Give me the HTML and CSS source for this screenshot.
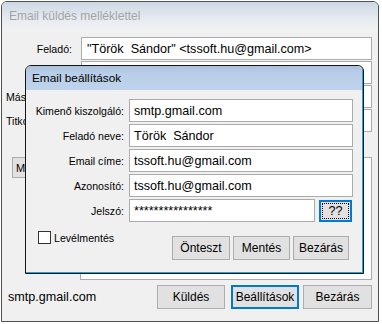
FILE: index.html
```html
<!DOCTYPE html>
<html lang="hu">
<head>
<meta charset="utf-8">
<title>Email küldés melléklettel</title>
<link rel="stylesheet" href="styles.css">
</head>
<body>
<div class="window">
  <div class="titlebar">Email küldés melléklettel</div>
  <div class="main">
    <div class="fields">
      <span class="lbl right">Feladó:</span><div class="input">"Török&nbsp; Sándor" &lt;tssoft.hu@gmail.com&gt;</div>
      <span class="lbl right"></span><div class="input"></div>
      <span class="lbl">Másolat:</span><div class="input"></div>
      <span class="lbl">Titkos:</span><div class="input"></div>
    </div>
    <div class="attach">
      <button class="btn attach-btn">M</button>
      <div class="textarea"></div>
    </div>
    <div class="footer">
      <span class="status">smtp.gmail.com</span>
      <button class="btn w-kuld">Küldés</button>
      <button class="btn focus w-beall">Beállítások</button>
      <button class="btn w-bez">Bezárás</button>
    </div>
  </div>

  <div class="dialog">
    <div class="dtitle">Email beállítások</div>
    <div class="dform">
      <span class="dlbl">Kimenő kiszolgáló:</span><div class="input">smtp.gmail.com</div>
      <span class="dlbl">Feladó neve:</span><div class="input">Török&nbsp; Sándor</div>
      <span class="dlbl">Email címe:</span><div class="input">tssoft.hu@gmail.com</div>
      <span class="dlbl">Azonosító:</span><div class="input">tssoft.hu@gmail.com</div>
      <span class="dlbl">Jelszó:</span>
      <div class="pwrow">
        <div class="input pw">****************</div>
        <button class="btn focus qq"><span class="dots">??</span></button>
      </div>
    </div>
    <div class="dbottom">
      <label class="check"><span class="box"></span>Levélmentés</label>
      <div class="dbtns">
        <button class="btn w-ont">Önteszt</button>
        <button class="btn w-ment">Mentés</button>
        <button class="btn w-dbez">Bezárás</button>
      </div>
    </div>
  </div>
</div>
</body>
</html>
```

FILE: styles.css
```css
html, body {
  margin: 0;
  padding: 0;
  background: #ffffff;
}
body {
  width: 382px;
  height: 324px;
  overflow: hidden;
  font-family: "Liberation Sans", Arial, sans-serif;
}
.window {
  position: relative;
  box-sizing: border-box;
  margin: 1px 0 0 1px;
  width: 378px;
  height: 321px;
  border: 1px solid #505050;
  border-radius: 6px 6px 0 0;
  background: #f0f0f0;
  display: flex;
  flex-direction: column;
}
.titlebar {
  height: 28px;
  flex: none;
  box-sizing: border-box;
  padding-left: 7px;
  display: flex;
  align-items: center;
  font-size: 12px;
  color: #a3a3a3;
  border-radius: 5px 5px 0 0;
  background: linear-gradient(#cdd7e4, #e7ebf1 60%, #f0f1f3);
}
.main {
  flex: 1;
  display: flex;
  flex-direction: column;
  padding-top: 7px;
}
.fields {
  display: grid;
  grid-template-columns: 66px 291px;
  column-gap: 9px;
  row-gap: 1px;
  padding-left: 4px;
}
.lbl {
  font-size: 10.6px;
  color: #000;
  display: flex;
  align-items: center;
  white-space: nowrap;
}
.lbl.right {
  justify-content: flex-end;
}
.input {
  box-sizing: border-box;
  height: 23px;
  background: #fff;
  border: 1px solid #ababab;
  font-size: 12.6px;
  color: #000;
  padding-left: 5px;
  display: flex;
  align-items: center;
  white-space: nowrap;
  overflow: hidden;
}
.attach {
  margin-top: 25px;
  display: flex;
  align-items: flex-start;
  padding-left: 10px;
}
.btn {
  box-sizing: border-box;
  height: 24px;
  margin: 0;
  padding: 0;
  background: #e1e1e1;
  border: 1px solid #adadad;
  font-family: "Liberation Sans", Arial, sans-serif;
  font-size: 12px;
  color: #000;
}
.btn.focus {
  border: 2px solid #0078d7;
}
.attach-btn {
  width: 62px;
  height: 21px;
  font-size: 11px;
  text-align: left;
  padding-left: 3px;
}
.textarea {
  box-sizing: border-box;
  margin-left: 6px;
  width: 292px;
  height: 123px;
  background: #fff;
  border: 1px solid #ababab;
}
.footer {
  margin-top: 5px;
  display: flex;
  align-items: center;
  padding: 0 6px 0 6px;
}
.status {
  font-size: 12.6px;
  color: #000;
  margin-right: auto;
}
.w-kuld { width: 68px; }
.w-beall { width: 68px; margin-left: 6px; }
.w-bez { width: 69px; margin-left: 4px; }

/* dialog window lying over the main window */
.dialog {
  position: absolute;
  left: 23px;
  top: 63px;
  box-sizing: border-box;
  width: 339px;
  height: 209px;
  border: 1px solid #151515;
  border-radius: 6px 6px 0 0;
  background: #f0f0f0;
  box-shadow: inset -1px -1px 0 #19a6e4;
}
.dtitle {
  height: 24px;
  box-sizing: border-box;
  padding-left: 6px;
  display: flex;
  align-items: center;
  font-size: 11.8px;
  color: #000;
  border-radius: 5px 5px 0 0;
  background: linear-gradient(#a9c0dc, #b9cee8 30%, #bfd3ec);
  margin-right: 1px;
}
.dform {
  margin-top: 9px;
  display: grid;
  grid-template-columns: 98px 224px;
  column-gap: 5px;
  row-gap: 2px;
}
.dlbl {
  font-size: 10.6px;
  color: #000;
  display: flex;
  align-items: center;
  justify-content: flex-end;
  white-space: nowrap;
}
.dform .input {
  padding-left: 4px;
}
.pwrow {
  display: flex;
  align-items: center;
}
.input.pw {
  width: 186px;
}
.qq {
  width: 33px;
  height: 22px;
  margin-left: 4px;
  padding: 1px;
  display: flex;
}
.dots {
  flex: 1;
  border: 1px dotted #000;
  display: flex;
  align-items: center;
  justify-content: center;
  font-size: 12.6px;
}
.dbottom {
  margin-top: 9px;
  display: flex;
  align-items: flex-start;
  padding: 0 14px 0 12px;
}
.check {
  display: flex;
  align-items: center;
  font-size: 10.6px;
  color: #000;
}
.box {
  box-sizing: border-box;
  width: 13px;
  height: 13px;
  border: 1px solid #333;
  background: #fff;
  margin-right: 3px;
}
.dbtns {
  margin-left: auto;
  margin-top: 5px;
  display: flex;
}
.w-ont { width: 58px; }
.w-ment { width: 57px; margin-left: 3px; }
.w-dbez { width: 56px; margin-left: 3px; }
```
